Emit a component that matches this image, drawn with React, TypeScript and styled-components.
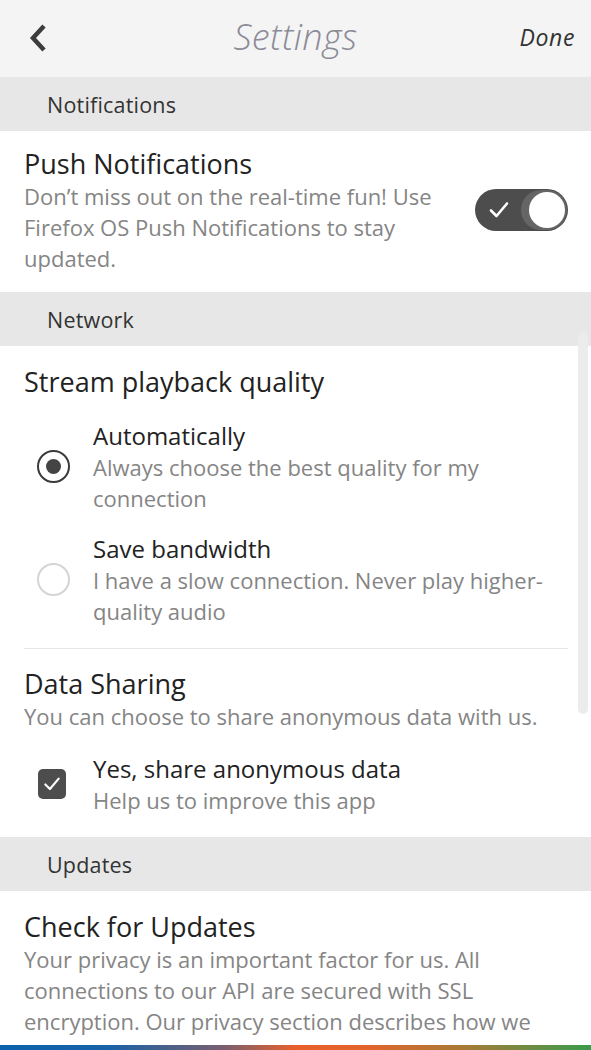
import React from "react";
import styled, { createGlobalStyle } from "styled-components";

const Global = createGlobalStyle`
  html, body { margin: 0; padding: 0; background: #fff; }
  body { font-family: "Open Sans", "Noto Sans", sans-serif; }
  * { box-sizing: border-box; }
`;

const Screen = styled.div`
  position: relative;
  width: 591px;
  height: 1050px;
  overflow: hidden;
  display: flex;
  flex-direction: column;
  background: #fff;
`;

const Header = styled.header`
  height: 77px;
  flex: none;
  background: #f4f4f4;
  display: grid;
  grid-template-columns: 90px 1fr 90px;
  align-items: center;
`;

const BackButton = styled.div`
  display: flex;
  align-items: center;
  padding-left: 28px;
  margin-top: -2px;
`;

const Title = styled.h1`
  margin: 0 0 4px 0;
  text-align: center;
  font-weight: 300;
  font-style: italic;
  font-size: 36px;
  color: #8b8b96;
  letter-spacing: 0.4px;
`;

const Done = styled.div`
  font-style: italic;
  font-size: 23px;
  color: #333;
  text-align: right;
  padding-right: 16px;
  letter-spacing: 0.6px;
  margin-bottom: 4px;
`;

const SectionHeader = styled.div`
  height: 54px;
  flex: none;
  background: #e7e7e7;
  display: flex;
  align-items: center;
  padding-left: 47px;
  font-size: 21.5px;
  color: #333;
  letter-spacing: 0.2px;
`;

const Block = styled.div<{ $pt?: number; $pb?: number }>`
  padding: ${(p) => p.$pt ?? 16}px 23px ${(p) => p.$pb ?? 18}px 24px;
  flex: none;
`;

const ItemTitle = styled.div`
  font-size: 27px;
  line-height: 34px;
  color: #222;
`;

const Desc = styled.div`
  font-size: 22px;
  line-height: 31px;
  color: #858585;
`;

const Row = styled.div`
  display: flex;
  align-items: flex-start;
  gap: 26px;
`;

const RowText = styled.div`
  flex: 1;
`;

const Toggle = styled.div`
  width: 93px;
  height: 42px;
  border-radius: 21px;
  background: #4d4d4d;
  flex: none;
  display: flex;
  align-items: center;
  justify-content: space-between;
  padding: 0 3px 0 12px;
  margin-top: 8px;
`;

const Knob = styled.div`
  width: 46px;
  height: 40px;
  border-radius: 20px;
  background: #656565;
  display: flex;
  align-items: center;
  justify-content: flex-end;
  padding-right: 2px;
  margin-right: -2px;
`;

const KnobInner = styled.div`
  width: 36px;
  height: 36px;
  border-radius: 50%;
  background: #fff;
`;

const Options = styled.div`
  display: flex;
  flex-direction: column;
  gap: 18px;
  margin-top: 20px;
`;

const Option = styled.div`
  display: flex;
  align-items: center;
  padding-left: 13px;
`;

const OptionIcon = styled.div`
  width: 56px;
  flex: none;
  display: flex;
  align-items: center;
`;

const OptionTitle = styled.div`
  font-size: 24px;
  line-height: 33px;
  color: #222;
`;

const Radio = styled.div<{ $on?: boolean }>`
  width: 33px;
  height: 33px;
  border-radius: 50%;
  border: 2.5px solid ${(p) => (p.$on ? "#3a3a3a" : "#d4d4d4")};
  display: flex;
  align-items: center;
  justify-content: center;
  &::after {
    content: "";
    display: ${(p) => (p.$on ? "block" : "none")};
    width: 15px;
    height: 15px;
    border-radius: 50%;
    background: #444;
  }
`;

const Checkbox = styled.div`
  width: 28px;
  height: 30px;
  margin-left: 1px;
  border-radius: 5px;
  background: #4d4d4d;
  display: flex;
  align-items: center;
  justify-content: center;
`;

const Divider = styled.div`
  height: 1px;
  background: #e6e6e6;
  margin: 0 23px 0 24px;
  flex: none;
`;

const Scrollbar = styled.div`
  position: absolute;
  left: 578px;
  top: 332px;
  width: 10px;
  height: 382px;
  border-radius: 5px;
  background: #ececec;
`;

const BottomBar = styled.div`
  position: absolute;
  left: 0;
  right: 0;
  bottom: 0;
  height: 5px;
  background: linear-gradient(90deg, #0b62ad 0%, #1762a8 18%, #7a5f6e 38%, #e8602c 50%, #e3642d 62%, #a97a35 78%, #389c4c 100%);
`;

const Check = ({ size = 22 }: { size?: number }) => (
  <svg width={size} height={size} viewBox="0 0 24 24" fill="none">
    <path d="M4 12.5 L9.5 18 L20 5.5" stroke="#fff" strokeWidth="2.6" strokeLinecap="round" strokeLinejoin="round" />
  </svg>
);

export default function App() {
  return (
    <Screen>
      <Global />
      <Header>
        <BackButton>
          <svg width="20" height="30" viewBox="0 0 20 30">
            <path d="M16 3 L5 15 L16 27" stroke="#3c3c3c" strokeWidth="4.5" fill="none" strokeLinejoin="miter" />
          </svg>
        </BackButton>
        <Title>Settings</Title>
        <Done>Done</Done>
      </Header>

      <SectionHeader>Notifications</SectionHeader>
      <Block>
        <ItemTitle>Push Notifications</ItemTitle>
        <Row>
          <RowText>
            <Desc>
              Don’t miss out on the real-time fun! Use Firefox OS Push Notifications to stay updated.
            </Desc>
          </RowText>
          <Toggle>
            <Check size={24} />
            <Knob>
              <KnobInner />
            </Knob>
          </Toggle>
        </Row>
      </Block>

      <SectionHeader>Network</SectionHeader>
      <Block $pt={19} $pb={21}>
        <ItemTitle>Stream playback quality</ItemTitle>
        <Options>
          <Option>
            <OptionIcon>
              <Radio $on />
            </OptionIcon>
            <RowText>
              <OptionTitle>Automatically</OptionTitle>
              <Desc>Always choose the best quality for my connection</Desc>
            </RowText>
          </Option>
          <Option>
            <OptionIcon>
              <Radio />
            </OptionIcon>
            <RowText>
              <OptionTitle>Save bandwidth</OptionTitle>
              <Desc>I have a slow connection. Never play higher-quality audio</Desc>
            </RowText>
          </Option>
        </Options>
      </Block>
      <Divider />
      <Block $pt={18} $pb={21}>
        <ItemTitle>Data Sharing</ItemTitle>
        <Desc>You can choose to share anonymous data with us.</Desc>
        <Options>
          <Option>
            <OptionIcon>
              <Checkbox>
                <Check size={20} />
              </Checkbox>
            </OptionIcon>
            <RowText>
              <OptionTitle>Yes, share anonymous data</OptionTitle>
              <Desc>Help us to improve this app</Desc>
            </RowText>
          </Option>
        </Options>
      </Block>

      <SectionHeader>Updates</SectionHeader>
      <Block $pt={19}>
        <ItemTitle>Check for Updates</ItemTitle>
        <Desc>
          Your privacy is an important factor for us. All connections to our API are secured with SSL encryption. Our
          privacy section describes how we handle your personal information and data.
        </Desc>
      </Block>

      <Scrollbar />
      <BottomBar />
    </Screen>
  );
}
